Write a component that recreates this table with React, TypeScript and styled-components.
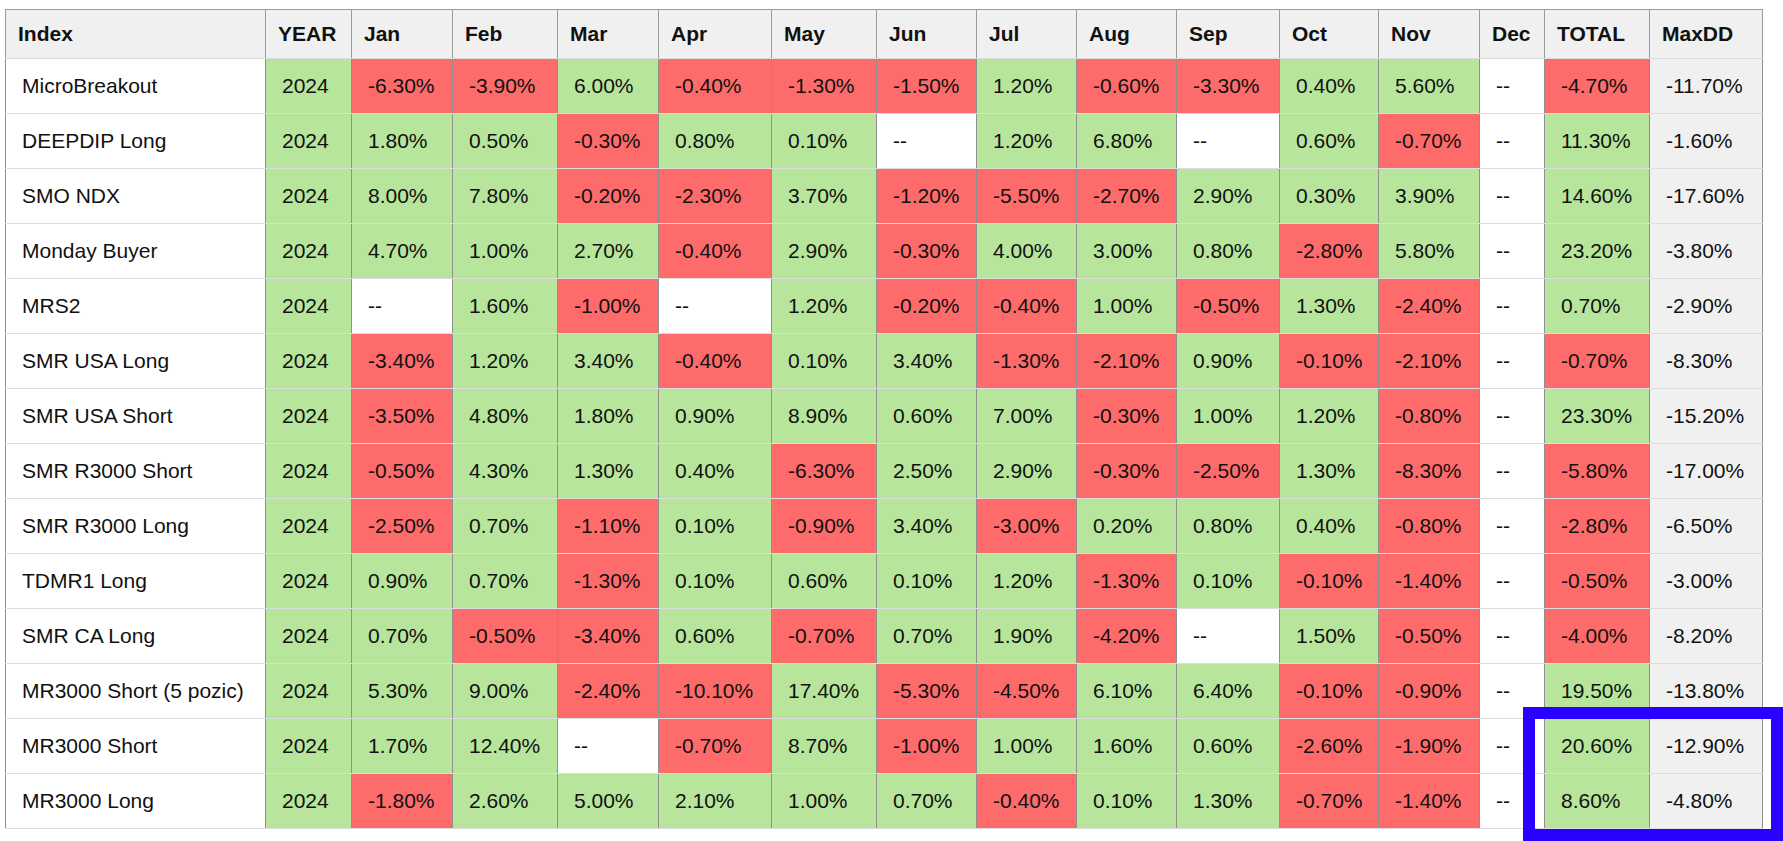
import React from 'react';
import styled, { createGlobalStyle } from 'styled-components';

const GlobalStyle = createGlobalStyle`
  html, body {
    margin: 0;
    padding: 0;
    background: #ffffff;
  }
  html {
    overflow: hidden;
  }
  body {
    font-family: "Liberation Sans", Arial, sans-serif;
    color: #111111;
  }
`;

const Page = styled.div`
  position: relative;
  height: 100vh;
  box-sizing: border-box;
  padding: 9px 0 0 5px;
`;

const Table = styled.table`
  border-collapse: collapse;
  table-layout: fixed;
  width: 1758px;
  font-size: 21px;
  border-top: 1px solid #9a9a9a;
  border-left: 1px solid #9a9a9a;
  border-right: 1px solid #9a9a9a;
`;

const Col = styled.col<{ $w: number }>`
  width: ${(p) => p.$w}px;
`;

const HeadRow = styled.tr`
  height: 49px;
  background: #f0f0f0;
`;

const Th = styled.th`
  text-align: left;
  font-weight: bold;
  padding: 0 0 0 12px;
  border-left: 1px solid #9a9a9a;
  border-right: 1px solid #9a9a9a;
  border-bottom: 1px solid #dcdcdc;
  white-space: nowrap;
`;

const BodyRow = styled.tr`
  height: 55px;
`;

type Tone = 'plain' | 'pos' | 'neg' | 'dd';

const toneBg: Record<Tone, string> = {
  plain: '#ffffff',
  pos: '#b7e59b',
  neg: '#fe6b6b',
  dd: '#f0f0f0',
};

const Td = styled.td<{ $tone: Tone }>`
  padding: 0 0 0 16px;
  background: ${(p) => toneBg[p.$tone]};
  border-left: 1px solid #8f8f8f;
  border-right: 1px solid #8f8f8f;
  border-bottom: 1px solid #dcdcdc;
  white-space: nowrap;
`;

// blue annotation frame drawn over the last two TOTAL / MaxDD cells
const Highlight = styled.div`
  position: absolute;
  left: 1523px;
  top: 707px;
  width: 260px;
  height: 134px;
  box-sizing: border-box;
  border: 12px solid #2a00ff;
  pointer-events: none;
`;

const columns = [
  { label: 'Index', w: 260 },
  { label: 'YEAR', w: 86 },
  { label: 'Jan', w: 101 },
  { label: 'Feb', w: 105 },
  { label: 'Mar', w: 101 },
  { label: 'Apr', w: 113 },
  { label: 'May', w: 105 },
  { label: 'Jun', w: 100 },
  { label: 'Jul', w: 100 },
  { label: 'Aug', w: 100 },
  { label: 'Sep', w: 103 },
  { label: 'Oct', w: 99 },
  { label: 'Nov', w: 101 },
  { label: 'Dec', w: 65 },
  { label: 'TOTAL', w: 105 },
  { label: 'MaxDD', w: 113 },
];

// months Jan..Dec, then TOTAL, MaxDD ; null = "--"
const rows: [string, (number | null)[]][] = [
  ['MicroBreakout', [-6.3, -3.9, 6.0, -0.4, -1.3, -1.5, 1.2, -0.6, -3.3, 0.4, 5.6, null, -4.7, -11.7]],
  ['DEEPDIP Long', [1.8, 0.5, -0.3, 0.8, 0.1, null, 1.2, 6.8, null, 0.6, -0.7, null, 11.3, -1.6]],
  ['SMO NDX', [8.0, 7.8, -0.2, -2.3, 3.7, -1.2, -5.5, -2.7, 2.9, 0.3, 3.9, null, 14.6, -17.6]],
  ['Monday Buyer', [4.7, 1.0, 2.7, -0.4, 2.9, -0.3, 4.0, 3.0, 0.8, -2.8, 5.8, null, 23.2, -3.8]],
  ['MRS2', [null, 1.6, -1.0, null, 1.2, -0.2, -0.4, 1.0, -0.5, 1.3, -2.4, null, 0.7, -2.9]],
  ['SMR USA Long', [-3.4, 1.2, 3.4, -0.4, 0.1, 3.4, -1.3, -2.1, 0.9, -0.1, -2.1, null, -0.7, -8.3]],
  ['SMR USA Short', [-3.5, 4.8, 1.8, 0.9, 8.9, 0.6, 7.0, -0.3, 1.0, 1.2, -0.8, null, 23.3, -15.2]],
  ['SMR R3000 Short', [-0.5, 4.3, 1.3, 0.4, -6.3, 2.5, 2.9, -0.3, -2.5, 1.3, -8.3, null, -5.8, -17.0]],
  ['SMR R3000 Long', [-2.5, 0.7, -1.1, 0.1, -0.9, 3.4, -3.0, 0.2, 0.8, 0.4, -0.8, null, -2.8, -6.5]],
  ['TDMR1 Long', [0.9, 0.7, -1.3, 0.1, 0.6, 0.1, 1.2, -1.3, 0.1, -0.1, -1.4, null, -0.5, -3.0]],
  ['SMR CA Long', [0.7, -0.5, -3.4, 0.6, -0.7, 0.7, 1.9, -4.2, null, 1.5, -0.5, null, -4.0, -8.2]],
  ['MR3000 Short (5 pozic)', [5.3, 9.0, -2.4, -10.1, 17.4, -5.3, -4.5, 6.1, 6.4, -0.1, -0.9, null, 19.5, -13.8]],
  ['MR3000 Short', [1.7, 12.4, null, -0.7, 8.7, -1.0, 1.0, 1.6, 0.6, -2.6, -1.9, null, 20.6, -12.9]],
  ['MR3000 Long', [-1.8, 2.6, 5.0, 2.1, 1.0, 0.7, -0.4, 0.1, 1.3, -0.7, -1.4, null, 8.6, -4.8]],
];

const fmt = (v: number | null) => (v === null ? '--' : `${v.toFixed(2)}%`);

const toneOf = (v: number | null): Tone => {
  if (v === null) return 'plain';
  return v < 0 ? 'neg' : 'pos';
};

const App = () => {
  return (
    <Page>
      <GlobalStyle />
      <Table>
        <colgroup>
          {columns.map((c) => (
            <Col key={c.label} $w={c.w} />
          ))}
        </colgroup>
        <thead>
          <HeadRow>
            {columns.map((c) => (
              <Th key={c.label}>{c.label}</Th>
            ))}
          </HeadRow>
        </thead>
        <tbody>
          {rows.map(([name, values]) => {
            const maxDD = values[values.length - 1];
            const rest = values.slice(0, -1);
            return (
              <BodyRow key={name}>
                <Td $tone="plain">{name}</Td>
                <Td $tone="pos">2024</Td>
                {rest.map((v, i) => (
                  <Td key={i} $tone={toneOf(v)}>
                    {fmt(v)}
                  </Td>
                ))}
                <Td $tone="dd">{fmt(maxDD)}</Td>
              </BodyRow>
            );
          })}
        </tbody>
      </Table>
      <Highlight />
    </Page>
  );
};

export default App;
